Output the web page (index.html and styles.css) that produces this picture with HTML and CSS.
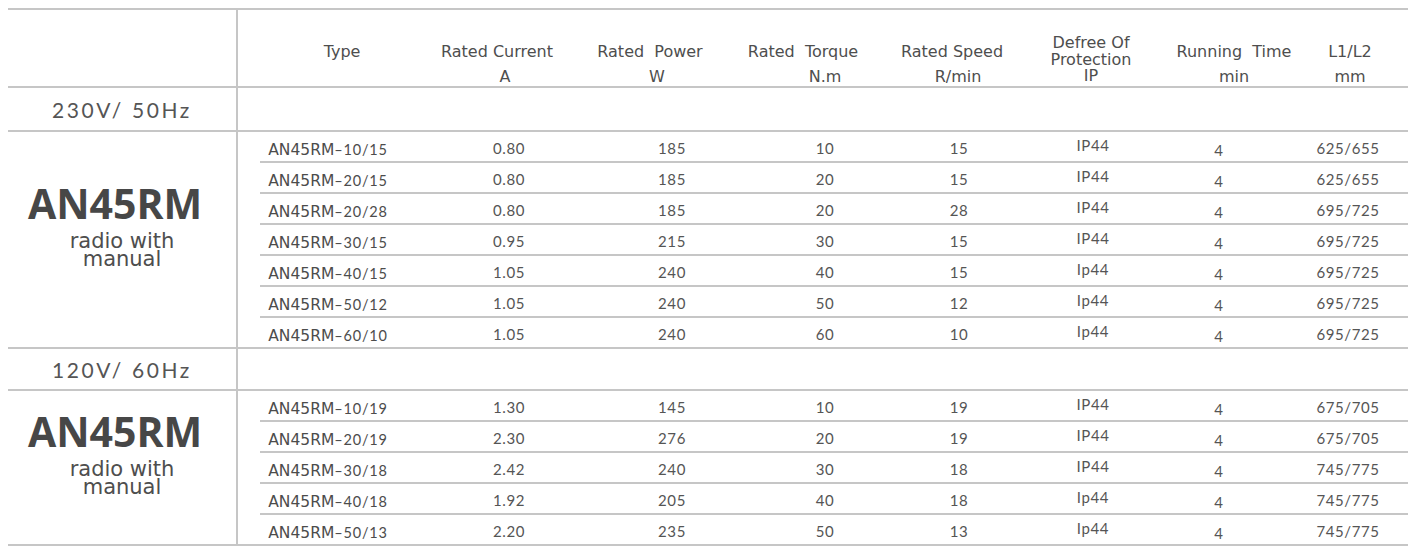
FILE: index.html
```html
<!DOCTYPE html>
<html lang="en">
<head>
<meta charset="utf-8">
<title>AN45RM specifications</title>
<link rel="stylesheet" href="styles.css">
</head>
<body>
<div class="sheet">
  <div class="section head">
    <div class="side"></div>
    <div class="main hcells">
      <div class="hc"><span>Type</span></div>
      <div class="hc"><span>Rated Current</span><span class="unit u-a">A</span></div>
      <div class="hc"><span>Rated  Power</span><span class="unit u-w">W</span></div>
      <div class="hc"><span>Rated  Torque</span><span class="unit u-nm">N.m</span></div>
      <div class="hc"><span>Rated Speed</span><span class="unit u-r">R/min</span></div>
      <div class="hc tri"><span>Defree Of</span><span>Protection</span><span>IP</span></div>
      <div class="hc"><span>Running  Time</span><span class="unit">min</span></div>
      <div class="hc"><span>L1/L2</span><span class="unit">mm</span></div>
    </div>
  </div>

  <div class="section band">
    <div class="side band-label">230V/ 50Hz</div>
    <div class="main"></div>
  </div>

  <div class="section group">
    <div class="side model">
      <div class="model-name">AN45RM</div>
      <div class="model-desc">radio with<br>manual</div>
    </div>
    <div class="main rows">
      <div class="row"><div class="c type">AN45RM<span class="sfx">–10/15</span></div><div class="c">0.80</div><div class="c">185</div><div class="c">10</div><div class="c">15</div><div class="c ip">IP44</div><div class="c time">4</div><div class="c">625/655</div></div>
      <div class="row"><div class="c type">AN45RM<span class="sfx">–20/15</span></div><div class="c">0.80</div><div class="c">185</div><div class="c">20</div><div class="c">15</div><div class="c ip">IP44</div><div class="c time">4</div><div class="c">625/655</div></div>
      <div class="row"><div class="c type">AN45RM<span class="sfx">–20/28</span></div><div class="c">0.80</div><div class="c">185</div><div class="c">20</div><div class="c">28</div><div class="c ip">IP44</div><div class="c time">4</div><div class="c">695/725</div></div>
      <div class="row"><div class="c type">AN45RM<span class="sfx">–30/15</span></div><div class="c">0.95</div><div class="c">215</div><div class="c">30</div><div class="c">15</div><div class="c ip">IP44</div><div class="c time">4</div><div class="c">695/725</div></div>
      <div class="row"><div class="c type">AN45RM<span class="sfx">–40/15</span></div><div class="c">1.05</div><div class="c">240</div><div class="c">40</div><div class="c">15</div><div class="c ip">Ip44</div><div class="c time">4</div><div class="c">695/725</div></div>
      <div class="row"><div class="c type">AN45RM<span class="sfx">–50/12</span></div><div class="c">1.05</div><div class="c">240</div><div class="c">50</div><div class="c">12</div><div class="c ip">Ip44</div><div class="c time">4</div><div class="c">695/725</div></div>
      <div class="row"><div class="c type">AN45RM<span class="sfx">–60/10</span></div><div class="c">1.05</div><div class="c">240</div><div class="c">60</div><div class="c">10</div><div class="c ip">Ip44</div><div class="c time">4</div><div class="c">695/725</div></div>
    </div>
  </div>

  <div class="section band band-2">
    <div class="side band-label">120V/ 60Hz</div>
    <div class="main"></div>
  </div>

  <div class="section group">
    <div class="side model">
      <div class="model-name">AN45RM</div>
      <div class="model-desc">radio with<br>manual</div>
    </div>
    <div class="main rows">
      <div class="row"><div class="c type">AN45RM<span class="sfx">–10/19</span></div><div class="c">1.30</div><div class="c">145</div><div class="c">10</div><div class="c">19</div><div class="c ip">IP44</div><div class="c time">4</div><div class="c">675/705</div></div>
      <div class="row"><div class="c type">AN45RM<span class="sfx">–20/19</span></div><div class="c">2.30</div><div class="c">276</div><div class="c">20</div><div class="c">19</div><div class="c ip">IP44</div><div class="c time">4</div><div class="c">675/705</div></div>
      <div class="row"><div class="c type">AN45RM<span class="sfx">–30/18</span></div><div class="c">2.42</div><div class="c">240</div><div class="c">30</div><div class="c">18</div><div class="c ip">IP44</div><div class="c time">4</div><div class="c">745/775</div></div>
      <div class="row"><div class="c type">AN45RM<span class="sfx">–40/18</span></div><div class="c">1.92</div><div class="c">205</div><div class="c">40</div><div class="c">18</div><div class="c ip">Ip44</div><div class="c time">4</div><div class="c">745/775</div></div>
      <div class="row"><div class="c type">AN45RM<span class="sfx">–50/13</span></div><div class="c">2.20</div><div class="c">235</div><div class="c">50</div><div class="c">13</div><div class="c ip">Ip44</div><div class="c time">4</div><div class="c">745/775</div></div>
    </div>
  </div>
</div>
</body>
</html>
```

FILE: styles.css
```css
* {
  box-sizing: border-box;
  margin: 0;
  padding: 0;
}

body {
  margin: 8px;
  background: #ffffff;
  color: #525252;
  font-family: "DejaVu Sans", Verdana, sans-serif;
}

.sheet {
  width: 1400px;
  border-top: 2px solid #c6c6c6;
}

.section {
  display: flex;
  border-bottom: 2px solid #c6c6c6;
}

.side {
  width: 230px;
  flex: none;
  border-right: 2px solid #c6c6c6;
}

.main {
  flex: 1;
}

/* header */
.head {
  height: 78px;
}

.hcells {
  display: flex;
  padding-top: 29px;
}

.hc {
  width: 110px;
  flex: none;
  display: flex;
  flex-direction: column;
  align-items: center;
  font-size: 16px;
  line-height: 25px;
  white-space: pre;
  color: #4e4e4e;
}

.hc:nth-child(1) { margin-left: 49px; }
.hc:nth-child(2) { margin-left: 45px; }
.hc:nth-child(3) { margin-left: 43px; }
.hc:nth-child(4) { margin-left: 43px; }
.hc:nth-child(5) { margin-left: 39px; }
.hc:nth-child(6) { margin-left: 29px; }
.hc:nth-child(7) { margin-left: 33px; }
.hc:nth-child(8) { margin-left: 6px; }

.hc.tri {
  line-height: 16.5px;
  margin-top: -4px;
}

.u-a { margin-left: 16px; }
.u-w { margin-left: 14px; }
.u-nm { margin-left: 44px; }
.u-r { margin-left: 12px; }

/* voltage bands */
.band {
  height: 44px;
}

.band-2 {
  height: 42px;
}

.band-label {
  display: flex;
  align-items: center;
  justify-content: center;
  font-family: "Lato", "DejaVu Sans", sans-serif;
  font-size: 21px;
  letter-spacing: 2.6px;
  color: #555;
}

/* model groups */
.model {
  display: flex;
  flex-direction: column;
  align-items: center;
  justify-content: center;
  padding-bottom: 32px;
}

.model-name {
  font-family: "Open Sans", "DejaVu Sans", sans-serif;
  font-weight: 700;
  font-size: 41px;
  line-height: 48px;
  color: #474747;
  margin-right: 14px;
}

.model-desc {
  font-size: 21px;
  line-height: 18px;
  text-align: center;
  color: #4e4e4e;
  margin-top: 5px;
}

.rows {
  padding-left: 22px;
}

.row {
  display: flex;
  align-items: center;
  height: 31px;
  border-bottom: 2px solid #c6c6c6;
}

.row:last-child {
  height: 29px;
  border-bottom: none;
}

.c {
  width: 80px;
  flex: none;
  text-align: center;
  font-family: "Lato", "DejaVu Sans", sans-serif;
  font-size: 15px;
  letter-spacing: 0.6px;
  padding-top: 3px;
  white-space: nowrap;
  color: #555;
}

.c.type {
  width: 140px;
  padding-top: 6px;
  padding-right: 4px;
  font-family: "DejaVu Sans", Verdana, sans-serif;
  font-size: 15.5px;
  letter-spacing: 0;
  color: #4c4c4c;
}

.sfx {
  font-family: "Lato", "DejaVu Sans", sans-serif;
  font-size: 14.5px;
  letter-spacing: 0.8px;
}

.c.ip {
  padding-top: 0;
  padding-bottom: 3px;
}

.c.time {
  padding-top: 7px;
}

.c:nth-child(2) { margin-left: 69px; }
.c:nth-child(3) { margin-left: 83px; }
.c:nth-child(4) { margin-left: 73px; }
.c:nth-child(5) { margin-left: 54px; }
.c:nth-child(6) { margin-left: 54px; }
.c:nth-child(7) { margin-left: 46px; }
.c:nth-child(8) { margin-left: 49px; }
```
